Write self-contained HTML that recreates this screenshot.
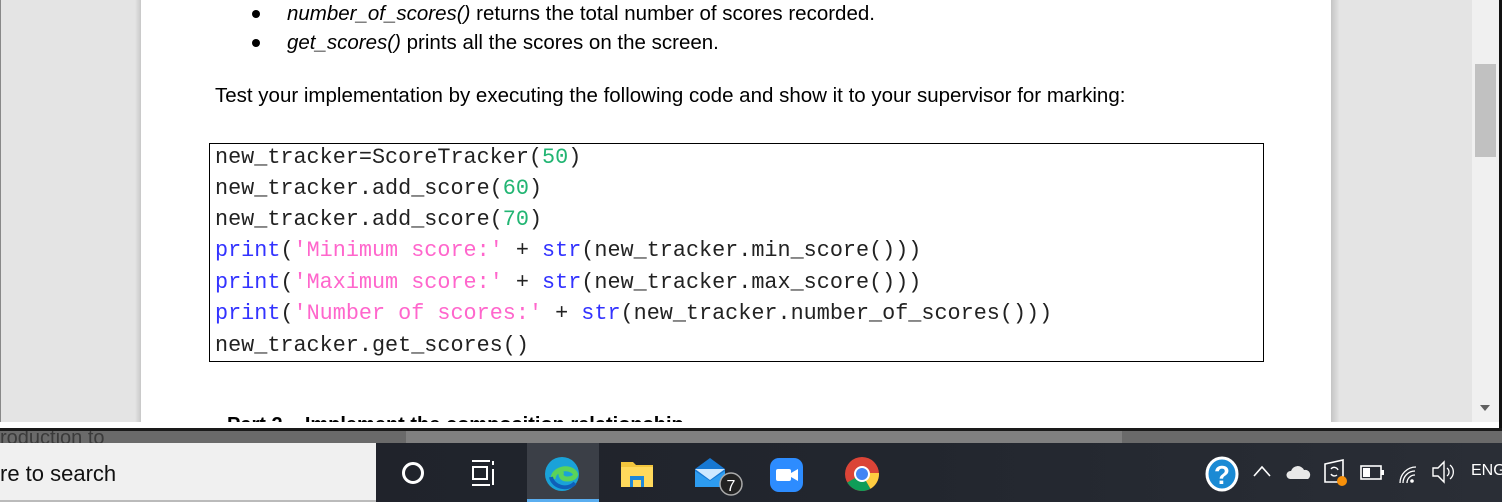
<!DOCTYPE html>
<html><head><meta charset="utf-8"><style>
*{margin:0;padding:0;box-sizing:border-box}
body{width:1502px;height:502px;overflow:hidden;background:#e4e4e4;position:relative;font-family:"Liberation Sans",sans-serif}
.abs{position:absolute}
.page{left:141px;top:0;width:1190px;height:422px;background:#fff}
.t{font-family:"Liberation Sans",sans-serif;font-size:20.5px;color:#000;white-space:nowrap;letter-spacing:0}
.code{left:209px;top:143px;width:1055px;height:219px;border:1px solid #000;background:#fff}
.ln{position:absolute;left:5px;font-family:"Liberation Mono",monospace;font-size:21.8px;color:#222;white-space:pre;line-height:20px}
.g{color:#22b573}.p{color:#ff66cc}.b{color:#3333ff}
</style></head><body>
<div class="abs" style="left:0;top:0;width:141px;height:430px;background:#e4e4e4;border-left:1px solid #888"></div>
<div class="abs" style="left:135px;top:0;width:6px;height:422px;background:linear-gradient(90deg,#e4e4e4,#c8c8c8)"></div>
<div class="abs page"></div>
<div class="abs" style="left:1331px;top:0;width:8px;height:422px;background:linear-gradient(90deg,#c4c4c4,#e2e2e2)"></div>
<div class="abs" style="left:1472px;top:0;width:27px;height:428px;background:#f0f0f0"></div>
<div class="abs" style="left:1475px;top:64px;width:21px;height:93px;background:#c1c1c1"></div>
<div class="abs" style="left:1480px;top:405px;width:0;height:0;border-left:5px solid transparent;border-right:5px solid transparent;border-top:6px solid #606060"></div>
<div class="abs" style="left:1499px;top:0;width:3px;height:432px;background:#111"></div>

<div class="abs" style="left:252px;top:10px;width:8px;height:8px;border-radius:50%;background:#000"></div>
<div class="abs" style="left:252px;top:39px;width:8px;height:8px;border-radius:50%;background:#000"></div>
<div class="abs t" style="left:287px;top:2px"><i>number_of_scores()</i> returns the total number of scores recorded.</div>
<div class="abs t" style="left:287px;top:31px"><i>get_scores()</i> prints all the scores on the screen.</div>
<div class="abs t" style="left:215px;top:84px">Test your implementation by executing the following code and show it to your supervisor for marking:</div>

<div class="abs code">
<div class="ln" style="top:4px">new_tracker=ScoreTracker(<span class="g">50</span>)</div>
<div class="ln" style="top:35px">new_tracker.add_score(<span class="g">60</span>)</div>
<div class="ln" style="top:66px">new_tracker.add_score(<span class="g">70</span>)</div>
<div class="ln" style="top:97px"><span class="b">print</span>(<span class="p">'Minimum score:'</span> + <span class="b">str</span>(new_tracker.min_score()))</div>
<div class="ln" style="top:129px"><span class="b">print</span>(<span class="p">'Maximum score:'</span> + <span class="b">str</span>(new_tracker.max_score()))</div>
<div class="ln" style="top:160px"><span class="b">print</span>(<span class="p">'Number of scores:'</span> + <span class="b">str</span>(new_tracker.number_of_scores()))</div>
<div class="ln" style="top:192px">new_tracker.get_scores()</div>
</div>

<div class="abs" style="left:0;top:404px;width:1499px;height:18px;overflow:hidden">
<div class="abs t" style="left:227px;top:10px;font-weight:bold;font-size:20px">Part 2 – Implement the composition relationship</div>
</div>
<div class="abs" style="left:0;top:422px;width:1499px;height:6px;background:#fff"></div>
<div class="abs" style="left:0;top:428px;width:1502px;height:3px;background:#1a1a1a"></div>
<div class="abs" style="left:0;top:431px;width:1502px;height:12px;background:#6a6a6a;overflow:hidden">
<div class="abs" style="left:406px;top:0;width:716px;height:12px;background:#808080"></div>
<div class="abs t" style="left:0;top:-4px;color:#3a3a3a;font-size:20px">roduction to</div>
</div>

<div class="abs" style="left:0;top:443px;width:1502px;height:59px;background:linear-gradient(90deg,#1e2129,#22262e 60%,#2a2e36)"></div>
<div class="abs" style="left:0;top:443px;width:376px;height:59px;background:#f0f0f0;border-bottom:2px solid #bbb"></div>
<div class="abs" style="left:0;top:461px;font-size:22px;color:#111;white-space:nowrap">re to search</div>
<div class="abs" style="left:402px;top:462px;width:22px;height:22px;border:3px solid #fff;border-radius:50%"></div>
<svg class="abs" style="left:470px;top:459px" width="26" height="28"><path d="M2 2h18M2 26h18M3 8h14v12H3z M23 2v4M23 10v16" stroke="#fff" stroke-width="2" fill="none"/></svg>
<div class="abs" style="left:527px;top:443px;width:72px;height:59px;background:#3b3f47;border-bottom:3px solid #5aaef0"></div>
<svg class="abs" style="left:543px;top:455px" width="38" height="38"><circle cx="19" cy="19" r="17" fill="#1aa2d8"/><path d="M10 24c0-10 16-14 22-6 2 3-2 6-8 6-6 0-8-6-4-8" stroke="#5ad35a" stroke-width="5" fill="none"/><path d="M8 22c2 10 16 14 24 6" stroke="#0f5fb8" stroke-width="4" fill="none"/></svg>
<svg class="abs" style="left:620px;top:458px" width="34" height="32"><path d="M1 4h12l3 3h17v22H1z" fill="#f2c53d"/><rect x="1" y="9" width="32" height="20" fill="#ffd95c"/><rect x="10" y="18" width="14" height="11" fill="#1e88d9"/><rect x="13" y="22" width="8" height="7" fill="#ffd95c"/></svg>
<svg class="abs" style="left:692px;top:455px" width="56" height="44"><path d="M3 14L18 3 33 14v18H3z" fill="#1778d2"/><path d="M3 14l15 11 15-11" fill="#cde8ff"/><path d="M3 16l15 10 15-10v16H3z" fill="#2d9cf0"/><circle cx="39" cy="29" r="11" fill="#222" stroke="#aaa" stroke-width="1.5"/><text x="34.5" y="36" font-size="16" fill="#fff" font-family="Liberation Sans">7</text></svg>
<svg class="abs" style="left:769px;top:457px" width="36" height="36"><rect x="1" y="1" width="33" height="34" rx="9" fill="#2d8cff"/><rect x="7" y="12" width="15" height="12" rx="2" fill="#fff"/><path d="M22 16l7-4v12l-7-4z" fill="#fff"/></svg>
<svg class="abs" style="left:844px;top:456px" width="36" height="36"><circle cx="18" cy="18" r="17" fill="#db4437"/><path d="M18 18L3.3 26.5A17 17 0 0 0 26.5 32.7z" fill="#0f9d58"/><path d="M18 18L26.5 32.7A17 17 0 0 0 35 18V17H18z" fill="#ffcd40"/><circle cx="18" cy="18" r="8" fill="#fff"/><circle cx="18" cy="18" r="6" fill="#4285f4"/></svg>
<svg class="abs" style="left:1205px;top:456px" width="34" height="36"><ellipse cx="17" cy="18" rx="15" ry="16" fill="#1a8ad4" stroke="#fff" stroke-width="3"/><text x="9" y="28" font-size="26" font-weight="bold" fill="#fff" font-family="Liberation Sans">?</text></svg>
<svg class="abs" style="left:1252px;top:464px" width="20" height="14"><path d="M2 12l8-9 8 9" stroke="#fff" stroke-width="1.6" fill="none"/></svg>
<svg class="abs" style="left:1286px;top:463px" width="26" height="18"><path d="M4 16a4 4 0 0 1 1-8 7 7 0 0 1 13-1 5 5 0 0 1 4 9z" fill="#e8e8e8"/></svg>
<svg class="abs" style="left:1323px;top:459px" width="26" height="28"><path d="M2 5l18-4v22H2z" fill="none" stroke="#fff" stroke-width="1.6"/><path d="M8 10a4 4 0 0 1 7 1M14 16a4 4 0 0 1-6-1" stroke="#fff" stroke-width="1.4" fill="none"/><circle cx="19" cy="22" r="5" fill="#f7900a"/></svg>
<svg class="abs" style="left:1360px;top:464px" width="26" height="18"><rect x="1" y="2" width="20" height="13" fill="none" stroke="#fff" stroke-width="1.6"/><rect x="3" y="4" width="7" height="9" fill="#fff"/><rect x="21" y="6" width="3" height="5" fill="#fff"/></svg>
<svg class="abs" style="left:1397px;top:459px" width="26" height="26"><path d="M3 24a16 16 0 0 1 16-16M6 24a12 12 0 0 1 12-12M10 24a8 8 0 0 1 8-8" stroke="#fff" stroke-width="1.3" fill="none"/><circle cx="15" cy="22" r="1.8" fill="#fff"/></svg>
<svg class="abs" style="left:1431px;top:459px" width="26" height="26"><path d="M2 9h5l6-6v20l-6-6H2z" fill="none" stroke="#fff" stroke-width="1.4"/><path d="M16 9a5 5 0 0 1 0 8M19 6a9 9 0 0 1 0 14" stroke="#fff" stroke-width="1.3" fill="none"/></svg>
<div class="abs" style="left:1471px;top:462px;font-size:16px;color:#fff">ENG</div>
</body></html>
